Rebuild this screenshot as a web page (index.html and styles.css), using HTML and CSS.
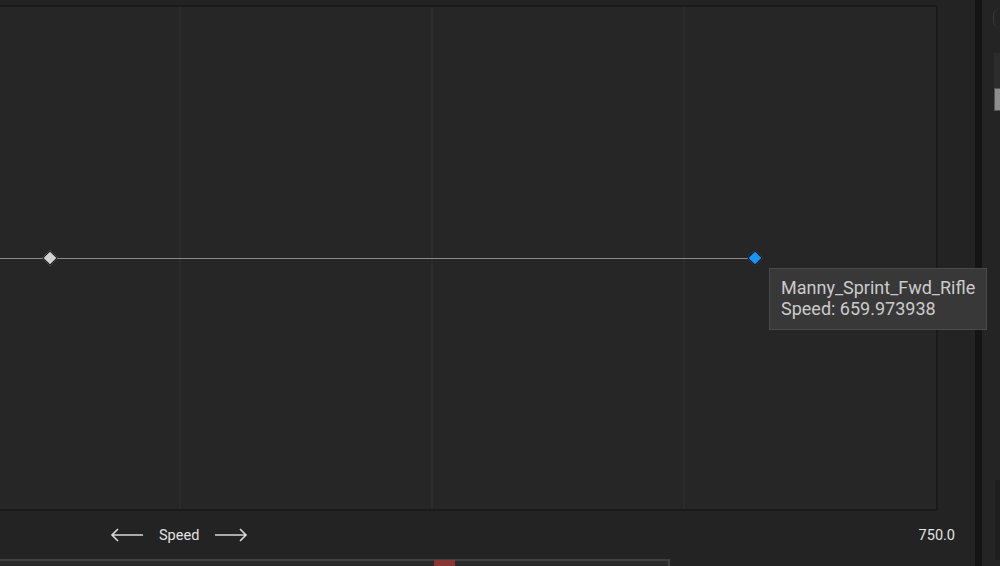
FILE: index.html
```html
<!DOCTYPE html>
<html>
<head>
<meta charset="utf-8">
<link rel="stylesheet" href="styles.css">
</head>
<body>
<div class="app">
  <div class="main">
    <div class="graph">
      <div class="grid-line" style="left:179px"></div>
      <div class="grid-line" style="left:431px"></div>
      <div class="grid-line" style="left:683px"></div>
      <div class="curve"></div>
      <div class="key key-gray" style="left:50px"></div>
      <div class="key key-blue" style="left:755px"></div>
    </div>
    <div class="axis">
      <div class="axis-label">
        <svg class="arrow" width="34" height="14" viewBox="0 0 34 14"><path d="M33 7H2M8 1L2 7l6 6" fill="none" stroke="#d8d8d8" stroke-width="1.6"/></svg>
        <span class="axis-name">Speed</span>
        <svg class="arrow" width="34" height="14" viewBox="0 0 34 14"><path d="M1 7h31M26 1l6 6-6 6" fill="none" stroke="#d8d8d8" stroke-width="1.6"/></svg>
      </div>
      <span class="axis-max">750.0</span>
    </div>
    <div class="timeline">
      <div class="marker"></div>
    </div>
  </div>
  <div class="splitter"></div>
  <div class="side">
    <div class="side-round"></div>
    <div class="side-field"></div>
    <div class="side-thumb"></div>
    <div class="side-fill"></div>
    <div class="side-bottom"></div>
  </div>
</div>
<div class="tooltip">
  <div>Manny_Sprint_Fwd_Rifle</div>
  <div>Speed: 659.973938</div>
</div>
</body>
</html>
```

FILE: styles.css
```css
html, body {
  margin: 0;
  padding: 0;
  width: 1000px;
  height: 566px;
  overflow: hidden;
  background: #232323;
  font-family: Roboto, "Liberation Sans", sans-serif;
}
.app {
  display: flex;
  height: 566px;
  position: relative;
}
.main {
  width: 975px;
  display: flex;
  flex-direction: column;
  padding-top: 5px;
  box-sizing: border-box;
}
.graph {
  position: relative;
  margin-left: -2px;
  width: 940px;
  height: 506px;
  box-sizing: border-box;
  border: 2px solid #1a1a1a;
  background: #262626;
}
.grid-line {
  position: absolute;
  top: 0;
  bottom: 0;
  width: 2px;
  background: #2c2c2c;
}
.curve {
  position: absolute;
  left: 0;
  width: 755px;
  top: 251px;
  height: 1px;
  background: #8a8a8a;
}
.key {
  position: absolute;
  top: 251px;
  width: 9px;
  height: 9px;
  transform: translate(-50%, -50%) rotate(45deg);
  border: 1px solid #151515;
}
.key-gray { background: #d2d2d2; }
.key-blue { background: #1b95f5; }
.axis {
  height: 48px;
  display: flex;
  align-items: center;
  justify-content: space-between;
  padding-left: 110px;
  padding-right: 20px;
}
.axis-label {
  display: flex;
  align-items: center;
  gap: 15px;
}
.axis-name {
  font-size: 14.5px;
  color: #e2e2e2;
}
.arrow { display: block; }
.axis-max {
  font-size: 14.5px;
  color: #e2e2e2;
}
.timeline {
  position: relative;
  width: 670px;
  flex: 1;
  box-sizing: border-box;
  border-top: 2px solid #404040;
  border-right: 2px solid #404040;
  background: #2a2a2a;
}
.marker {
  position: absolute;
  left: 434px;
  top: -1px;
  width: 21px;
  height: 8px;
  background: #8a3535;
}
.splitter {
  width: 7px;
  background: #141414;
}
.side {
  flex: 1;
  display: flex;
  flex-direction: column;
  align-items: flex-end;
  background: #242424;
}
.side-round {
  margin-top: 8px;
  width: 6px;
  height: 20px;
  border-left: 1px solid #3a3a3a;
  border-radius: 10px 0 0 10px;
}
.side-field {
  margin-top: 25px;
  width: 6px;
  height: 35px;
  background: #2c2c2c;
}
.side-thumb {
  width: 5px;
  height: 21px;
  background: #8e8e8e;
  border: 1px solid #555;
  border-right: none;
}
.side-fill { flex: 1; }
.side-bottom {
  width: 5px;
  height: 80px;
  margin-bottom: 6px;
  background: #1e1e1e;
}
.tooltip {
  position: absolute;
  left: 769px;
  top: 268px;
  width: 218px;
  height: 62px;
  box-sizing: border-box;
  background: #383838;
  border: 1px solid #4b4b4b;
  padding: 8px 0 0 11px;
  color: #cbcbcb;
  font-size: 18px;
  line-height: 21px;
}
```
